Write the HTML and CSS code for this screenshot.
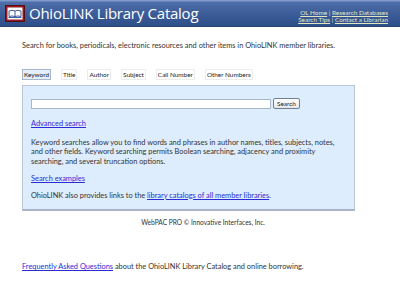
FILE: index.html
```html
<!DOCTYPE html>
<html>
<head>
<meta charset="utf-8">
<link rel="stylesheet" href="styles.css">
</head>
<body>
<header class="header">
  <div class="brand">
    <span class="logo">
      <svg width="20" height="17" viewBox="0 0 20 17">
        <rect x="0.5" y="0.5" width="19" height="16" fill="#8f1c22" stroke="#5a0d12"/>
        <rect x="2.5" y="2.5" width="15" height="12" fill="#ffffff"/>
        <path d="M4 11.5 L4 6 Q7 4.5 10 6 Q13 4.5 16 6 L16 11.5 Q13 10.5 10 11.5 Q7 10.5 4 11.5 Z M10 6 L10 11.5" fill="none" stroke="#3f5f9f" stroke-width="1"/>
        <path d="M3.5 12.5 L16.5 12.5" stroke="#3f5f9f" stroke-width="1"/>
      </svg>
    </span>
    <span class="title">OhioLINK Library Catalog</span>
  </div>
  <div class="toplinks">
    <div><a href="#">OL Home</a> | <a href="#">Research Databases</a></div>
    <div><a href="#">Search Tips</a> | <a href="#">Contact a Librarian</a></div>
  </div>
</header>

<main class="main">
  <p class="intro">Search for books, periodicals, electronic resources and other items in OhioLINK member libraries.</p>

  <nav class="tabs">
    <span class="tab active">Keyword</span>
    <span class="tab">Title</span>
    <span class="tab">Author</span>
    <span class="tab">Subject</span>
    <span class="tab">Call Number</span>
    <span class="tab">Other Numbers</span>
  </nav>

  <section class="panel">
    <div class="searchrow">
      <input class="field" type="text">
      <button class="btn">Search</button>
    </div>
    <p class="p1"><a href="#">Advanced search</a></p>
    <p class="p2">Keyword searches allow you to find words and phrases in author names, titles, subjects, notes, and other fields. Keyword searching permits Boolean searching, adjacency and proximity searching, and several truncation options.</p>
    <p class="p3"><a href="#">Search examples</a></p>
    <p class="p4">OhioLINK also provides links to the <a href="#">library catalogs of all member libraries</a>.</p>
  </section>

  <p class="footer">WebPAC PRO © Innovative Interfaces, Inc.</p>

  <p class="faq"><a href="#">Frequently Asked Questions</a> about the OhioLINK Library Catalog and online borrowing.</p>
</main>
</body>
</html>
```

FILE: styles.css
```css
html, body {
  margin: 0;
  padding: 0;
  background: #ffffff;
}
body {
  font-family: "Lato", "Open Sans", sans-serif;
  font-size: 7.4px;
  color: #333333;
  width: 400px;
}
a {
  color: #2b2bd6;
  text-decoration: underline;
}
.header {
  height: 26px;
  background: linear-gradient(#7f9acb 0px, #7f9acb 1px, #4f6fab 2px, #3c5c98 14px, #2f4f8b 26px);
  border-bottom: 1px solid #284679;
  display: flex;
  justify-content: space-between;
  align-items: center;
  padding: 0 12px 0 5px;
}
.brand {
  display: flex;
  align-items: center;
  gap: 4px;
}
.logo {
  display: flex;
  margin-top: 1px;
}
.title {
  font-family: "Open Sans", "Lato", sans-serif;
  font-size: 15px;
  color: #ffffff;
  letter-spacing: -0.25px;
}
.toplinks {
  font-size: 6.4px;
  color: #d8dcc0;
  text-align: right;
  line-height: 7.5px;
  margin-top: 6px;
}
.toplinks a {
  color: #e4e6c2;
}
.main {
  padding: 0 22px;
}
.intro {
  margin: 14px 0 0 0;
  line-height: 10px;
}
.tabs {
  display: flex;
  gap: 10px;
  margin-top: 18px;
  height: 11px;
}
.tab {
  padding: 0 1px;
  border: 1px solid #ececec;
  line-height: 9px;
  font-size: 6.4px;
  color: #222;
}
.tab.active {
  background: #e4edf8;
  border-color: #a8b8cc;
}
.panel {
  width: 333px;
  margin-top: 5px;
  background: #deedfd;
  border: 1px solid #bac6d6;
  border-bottom: 2px solid #a9b4c6;
  padding: 12px 14px 0 8px;
  box-sizing: border-box;
  height: 126px;
}
.searchrow {
  display: flex;
  align-items: center;
  gap: 2px;
  height: 11px;
}
.field {
  width: 240px;
  height: 10px;
  padding: 0;
  margin: 0;
  border: 1px solid #a9b7c8;
  background: #ffffff;
  box-sizing: border-box;
  outline: none;
}
.btn {
  font-family: "Lato", sans-serif;
  font-size: 6.4px;
  height: 11px;
  padding: 0 3px;
  margin: 0;
  border: 1px solid #6f7f96;
  border-radius: 2px;
  background: linear-gradient(#ffffff, #e6e6e6);
  color: #222;
  line-height: 9px;
}
.panel p {
  margin: 0;
  line-height: 9.7px;
}
.p1 { margin-top: 10px !important; }
.p2 { margin-top: 9px !important; }
.p3 { margin-top: 7px !important; }
.p4 { margin-top: 7px !important; }
.footer {
  width: 362px;
  text-align: center;
  font-size: 6.6px;
  margin: 7px 0 0 0;
  color: #333;
}
.faq {
  margin: 36px 0 0 0;
}
```
